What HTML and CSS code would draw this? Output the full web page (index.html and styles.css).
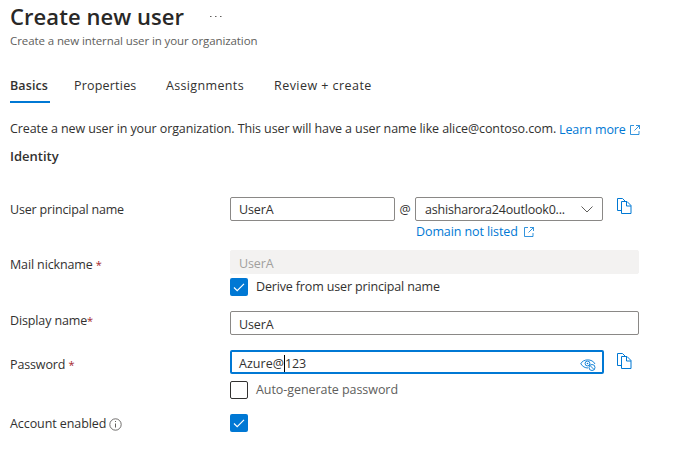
FILE: index.html
```html
<!DOCTYPE html>
<html lang="en">
<head>
<meta charset="utf-8">
<title>Create new user</title>
<link rel="stylesheet" href="styles.css">
</head>
<body>
<svg class="defs" width="0" height="0">
  <symbol id="copy" viewBox="0 0 15 17"><path d="M4.500 12.500H.5V.5h5l3 3M4.500 3.500h5.500l4 4v8H4.500zM9.500 3.500V8H14" fill="none" stroke="currentColor"/></symbol>
  <symbol id="external" viewBox="0 0 10 10"><path d="M4 .5H.5v9h8.500V6M6 .5h3.500V4M9.500.5L4.500 5.500" fill="none" stroke="currentColor" stroke-width=".8"/></symbol>
  <symbol id="check" viewBox="0 0 18 18"><path d="M4 9.500l3.200 3.200L14 5.800" fill="none" stroke="#fff" stroke-width="1.200"/></symbol>
</svg>
<header class="header">
  <h1 class="title">Create new user</h1>
  <svg class="more" width="12" height="3"><path d="M0 1h1.500v1H0zM5 1h1.500v1H5zM10 1h1.500v1H10z" fill="#605e5c"/></svg>
</header>
<p class="subtitle">Create a new internal user in your organization</p>
<nav class="tabs">
  <a class="tab tab-active">Basics</a>
  <a class="tab tab-properties">Properties</a>
  <a class="tab tab-assignments">Assignments</a>
  <a class="tab tab-review">Review + create</a>
</nav>
<main>
  <p class="intro"><span class="intro-text">Create a new user in your organization. This user will have a user name like alice@contoso.com.</span><a class="link learn">Learn more<svg class="external"><use href="#external"/></svg></a></p>
  <h2 class="section">Identity</h2>
  <div class="row row-principal">
    <span class="label">User principal name</span>
    <div class="principal">
      <div class="input input-user"><span>UserA</span></div>
      <span class="at">@</span>
      <div class="domain">
        <div class="input select"><span class="domain-name">ashisharora24outlook0...</span><svg class="chevron" width="12" height="7"><path d="M.5.5L6 6 11.500.5" fill="none" stroke="#605e5c"/></svg></div>
        <a class="link unlisted">Domain not listed<svg class="external"><use href="#external"/></svg></a>
      </div>
      <svg class="copy"><use href="#copy"/></svg>
    </div>
  </div>
  <div class="row row-nickname">
    <span class="label">Mail nickname <i class="required">*</i></span>
    <div class="field">
      <div class="input input-disabled"><span>UserA</span></div>
      <div class="option"><span class="box box-on"><svg width="18" height="18"><use href="#check"/></svg></span><span class="derive">Derive from user principal name</span></div>
    </div>
  </div>
  <div class="row row-display">
    <span class="label label-display">Display name<i class="required">*</i></span>
    <div class="field"><div class="input"><span>UserA</span></div></div>
  </div>
  <div class="row row-password">
    <span class="label">Password <i class="required">*</i></span>
    <div class="field">
      <div class="password-line">
        <div class="input input-focus"><span class="secret">Azure@</span><b class="caret"></b><span>123</span>
          <svg class="eye" width="17" height="14" viewBox="0 0 17 14"><g fill="none" stroke="#0078d4" stroke-width=".9"><path d="M.6 6C3 .5 12.500.5 15 6M1 6c1.500 2.500 4 4 7 4"/><circle cx="7.500" cy="5.500" r="2.400"/><circle cx="12" cy="9.500" r="3" fill="#fff"/><path d="M10 7.500l4 4"/></g><circle cx="7.500" cy="5.500" r=".8" fill="#0078d4"/></svg>
        </div>
        <svg class="copy copy-password"><use href="#copy"/></svg>
      </div>
      <div class="option option-auto"><span class="box"></span><span class="auto">Auto-generate password</span></div>
    </div>
  </div>
  <div class="row row-enabled">
    <span class="label label-enabled"><span>Account enabled</span><svg class="info" width="13" height="13" viewBox="0 0 13 13"><circle cx="6.500" cy="6.500" r="5.700" fill="none" stroke="#605e5c" stroke-width=".9"/><path d="M6 3h1v1H6zM6 5.500h1v4H6z" fill="#605e5c"/></svg></span>
    <span class="box box-on"><svg width="18" height="18"><use href="#check"/></svg></span>
  </div>
</main>
</body>
</html>
```
FILE: styles.css
```css
* { box-sizing: border-box; }
body {
  margin: 0;
  padding: 0 0 0 10px;
  width: 677px;
  height: 453px;
  overflow: hidden;
  background: #fff;
  color: #323130;
  font: 12.5px/18px "Open Sans", "Noto Sans", sans-serif;
  letter-spacing: -.13px;
}
h1, h2, p { margin: 0; }
svg { display: block; flex: none; }
.defs { position: absolute; }
.header { display: flex; height: 32px; white-space: nowrap; }
.title { width: 200px; font-size: 22px; line-height: 32px; font-weight: 600; letter-spacing: .07px; color: #292827; }
.more { margin-top: 15px; }
.subtitle { height: 37px; font-size: 11.500px; letter-spacing: -.09px; color: #605e5c; }
.tabs { display: flex; height: 34px; padding-top: 7px; gap: 24px; letter-spacing: .2px; }
.tab { height: 27px; line-height: 19px; white-space: nowrap; }
.tab-active { width: 40px; border-bottom: 2px solid #0078d4; font-weight: 600; letter-spacing: .1px; }
.tab-properties { width: 68px; }
.tab-assignments { width: 84px; letter-spacing: .35px; }
.tab-review { letter-spacing: .45px; }
.intro { display: flex; height: 27px; margin-top: 17px; white-space: nowrap; }
.intro-text { width: 549px; letter-spacing: -.1px; }
.link { display: flex; height: 18px; align-items: center; letter-spacing: -.1px; color: #0078d4; }
.external { width: 10px; height: 10px; margin-left: auto; }
.learn { width: 81px; padding-top: 1px; }
.section { height: 50px; font-size: 13px; line-height: 18px; font-weight: 600; letter-spacing: 0; }
.row { display: grid; grid-template-columns: 220px 1fr; white-space: nowrap; }
.label { padding-top: 4px; }
.required { color: #a4262c; font-size: 11px; font-style: normal; }
.row-principal { height: 53px; }
.row-principal .label { letter-spacing: -.18px; }
.principal, .password-line { display: flex; }
.input { display: flex; align-items: center; height: 24px; width: 409px; padding: 1px 9px 0 8px; border: 1px solid #8a8886; border-radius: 2px; }
.input-user { width: 165px; }
.at { width: 20px; text-align: center; line-height: 25px; }
.domain { width: 188px; }
.select { width: 188px; padding-left: 9px; }
.domain-name { letter-spacing: -.2px; }
.chevron { margin-left: auto; }
.unlisted { width: 118px; margin: 2px 0 0 1px; }
.copy { width: 15px; height: 17px; margin: 1px 0 0 14px; color: #0078d4; }
.copy-password { margin: 3px 0 0 13px; }
.row-nickname { height: 61px; }
.row-nickname .label { padding-top: 6px; }
.input-disabled { padding-top: 3px; border-color: #f3f2f1; background: #f3f2f1; color: #a19f9d; }
.option { display: flex; align-items: center; gap: 8px; margin-top: 4px; letter-spacing: -.15px; }
.box { width: 18px; height: 18px; border: 1px solid #323130; border-radius: 2px; }
.box-on { border: 0; background: #0078d4; }
.row-display { height: 39px; }
.row-display .input { padding-top: 3px; }
.label-display { padding-top: 1px; }
.row-password { height: 64px; }
.row-password .label { padding-top: 6px; }
.row-password .input-focus { width: 374px; padding: 3px 5px 0 7px; border: 2px solid #0078d4; }
.secret { letter-spacing: .03px; }
.input-focus .eye { margin: 2px 0 0 auto; }
.caret { width: 1px; height: 17px; background: #000; }
.option-auto { margin-top: 7px; letter-spacing: -.06px; color: #605e5c; }
.label-enabled { display: flex; padding-top: 1px; letter-spacing: -.08px; }
.info { margin: 3px 0 0 3px; }
```
